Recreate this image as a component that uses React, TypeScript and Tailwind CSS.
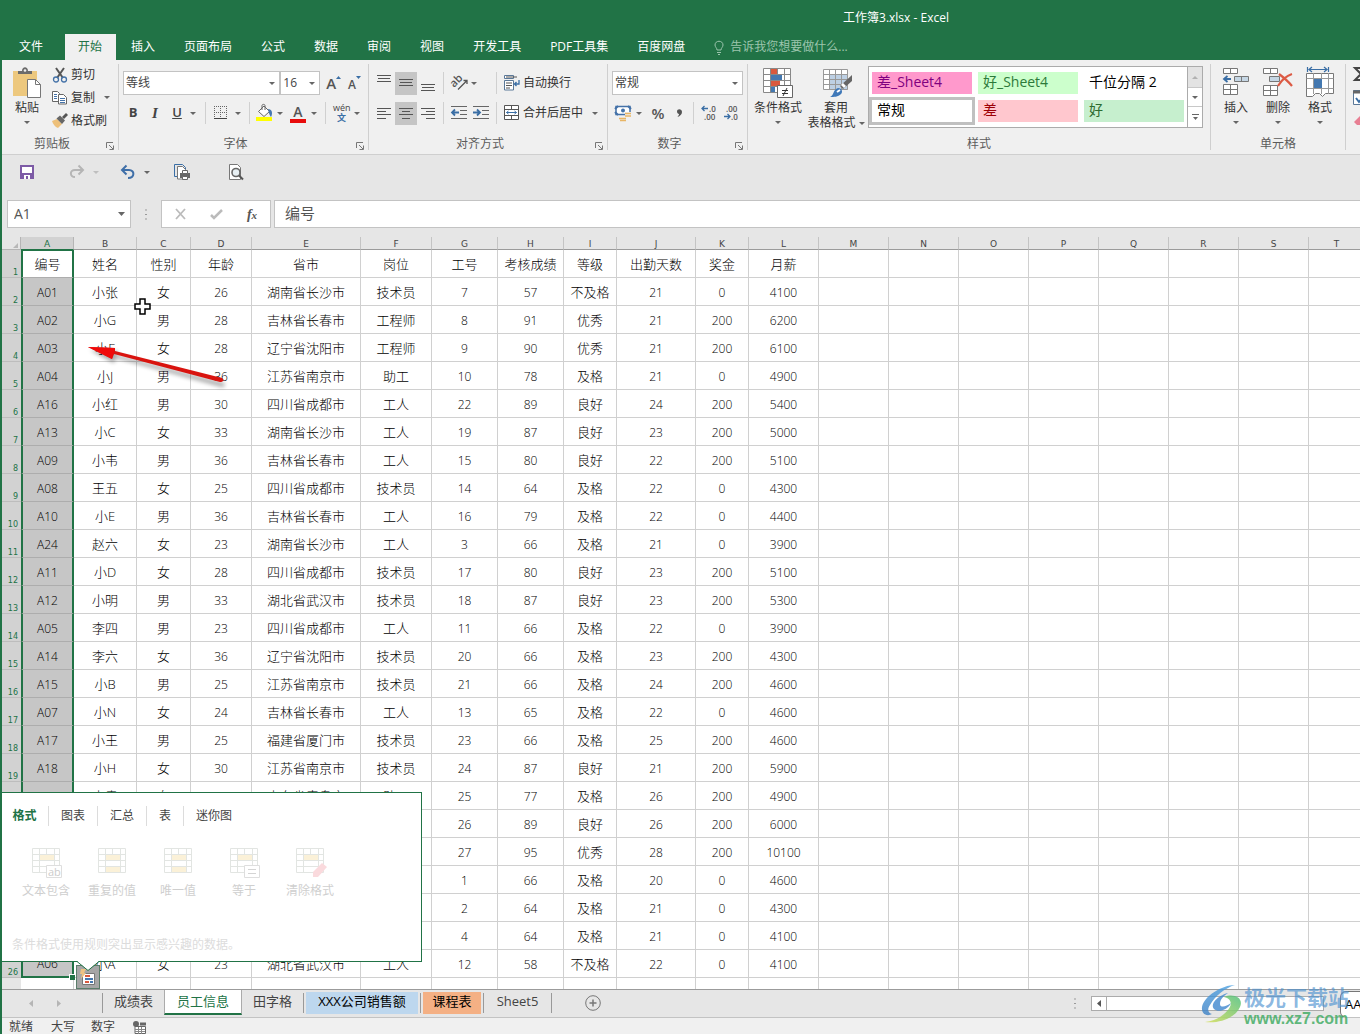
import React from "react";

const UI_FONT = "font-['Open_Sans','Noto_Sans_CJK_SC',sans-serif]";

const RIBBON_TABS = [
  "插入",
  "页面布局",
  "公式",
  "数据",
  "审阅",
  "视图",
  "开发工具",
  "PDF工具集",
  "百度网盘"
];

const COLUMNS: [string, number][] = [
  ["A", 53],
  ["B", 63],
  ["C", 54],
  ["D", 61],
  ["E", 109],
  ["F", 71],
  ["G", 66],
  ["H", 66],
  ["I", 53],
  ["J", 79],
  ["K", 53],
  ["L", 70],
  ["M", 70],
  ["N", 70],
  ["O", 70],
  ["P", 70],
  ["Q", 70],
  ["R", 70],
  ["S", 70],
  ["T", 56]
];

const ROWS: string[][] = [
  "编号,姓名,性别,年龄,省市,岗位,工号,考核成绩,等级,出勤天数,奖金,月薪",
  "A01,小张,女,26,湖南省长沙市,技术员,7,57,不及格,21,0,4100",
  "A02,小G,男,28,吉林省长春市,工程师,8,91,优秀,21,200,6200",
  "A03,小F,女,28,辽宁省沈阳市,工程师,9,90,优秀,21,200,6100",
  "A04,小J,男,36,江苏省南京市,助工,10,78,及格,21,0,4900",
  "A16,小红,男,30,四川省成都市,工人,22,89,良好,24,200,5400",
  "A13,小C,女,33,湖南省长沙市,工人,19,87,良好,23,200,5000",
  "A09,小韦,男,36,吉林省长春市,工人,15,80,良好,22,200,5100",
  "A08,王五,女,25,四川省成都市,技术员,14,64,及格,22,0,4300",
  "A10,小E,男,36,吉林省长春市,工人,16,79,及格,22,0,4400",
  "A24,赵六,女,23,湖南省长沙市,工人,3,66,及格,21,0,3900",
  "A11,小D,女,28,四川省成都市,技术员,17,80,良好,23,200,5100",
  "A12,小明,男,33,湖北省武汉市,技术员,18,87,良好,23,200,5300",
  "A05,李四,男,23,四川省成都市,工人,11,66,及格,22,0,3900",
  "A14,李六,女,36,辽宁省沈阳市,技术员,20,66,及格,23,200,4300",
  "A15,小B,男,25,江苏省南京市,技术员,21,66,及格,24,200,4600",
  "A07,小N,女,24,吉林省长春市,工人,13,65,及格,22,0,4600",
  "A17,小王,男,25,福建省厦门市,技术员,23,66,及格,25,200,4600",
  "A18,小H,女,30,江苏省南京市,技术员,24,87,良好,21,200,5900",
  "A19,小袁,女,34,山东省青岛市,助工,25,77,及格,26,200,4900",
  ",,,,,,26,89,良好,26,200,6000",
  ",,,,,,27,95,优秀,28,200,10100",
  ",,,,,,1,66,及格,20,0,4600",
  ",,,,,,2,64,及格,21,0,4300",
  ",,,,,,4,64,及格,21,0,4100",
  "A06,小A,女,23,湖北省武汉市,工人,12,58,不及格,22,0,4100",
  ""
].map(line => line.split(","));

const LAST_SELECTED = 25;

type IconProps = {
  w: number;
  h: number;
  className?: string;
  children: React.ReactNode;
};

const Icon = ({ w, h, className = "", children }: IconProps) => (
  <svg
    width={w}
    height={h}
    viewBox={`0 0 ${w} ${h}`}
    fill="none"
    className={`shrink-0 overflow-visible ${className}`}
    aria-hidden="true"
  >
    {children}
  </svg>
);

const Caret = ({ className = "" }: { className?: string }) => (
  <Icon w={6} h={3} className={className}>
    <path d="M0 0h6L3 3z" fill="#666" />
  </Icon>
);

const Divider = () => <div className="h-[22px] w-px shrink-0 bg-[#d0d0d0]" />;

type GroupProps = {
  title: string;
  className: string;
  launcher?: boolean;
  children: React.ReactNode;
};

const Group = ({ title, className, launcher = true, children }: GroupProps) => (
  <section
    className={`my-1 flex h-[86px] shrink-0 flex-col border-r border-[#cfcfcf] ${className}`}
  >
    <div className="h-[70px]">{children}</div>
    <div className="relative flex h-4 items-center justify-center pt-[3px] text-[#5c5c5c]">
      <span className={launcher ? "pr-4" : ""}>{title}</span>
      {launcher && (
        <button className="absolute right-1 bottom-0" aria-label={`${title}设置`}>
          <Icon w={8} h={8}>
            <path d="M.5 6V.5H7M3 3l4 4M7.500 3.500V7.500H3.500" stroke="#777" />
          </Icon>
        </button>
      )}
    </div>
  </section>
);

type LinesProps = { rows: [number, number][]; y: number };

const Lines = ({ rows, y }: LinesProps) => (
  <Icon w={14} h={17}>
    {rows.map(([x, width], i) => (
      <rect
        key={i}
        x={x}
        y={y + Math.floor(i * 3.4)}
        width={width}
        height="1"
        fill="#555"
      />
    ))}
  </Icon>
);

const AlignButton = ({
  label,
  active = false,
  rows,
  y
}: LinesProps & { label: string; active?: boolean }) => (
  <button
    aria-label={label}
    aria-pressed={active}
    className={`flex h-[23px] w-[22px] items-center justify-center ${
      active ? "bg-[#c5c5c5]" : ""
    }`}
  >
    <Lines rows={rows} y={y} />
  </button>
);

type ComboProps = { label: string; value: string; className: string };

const Combo = ({ label, value, className }: ComboProps) => (
  <div className={`relative flex h-6 items-center ${className}`}>
    <select
      aria-label={label}
      defaultValue={value}
      className="h-full w-full appearance-none border border-[#c3c3c3] bg-white pl-[2px] text-[#444] outline-none"
    >
      <option>{value}</option>
    </select>
    <Caret className="pointer-events-none absolute right-[5px]" />
  </div>
);

type BigButtonProps = {
  label: string;
  className: string;
  icon: React.ReactNode;
};

const BigButton = ({ label, className, icon }: BigButtonProps) => (
  <button className={`flex shrink-0 flex-col items-center ${className}`}>
    <span className="flex h-[35px] items-start pt-1">{icon}</span>
    <span className="h-[18px] leading-[18px]">{label}</span>
    <Caret className="mt-1" />
  </button>
);

/* ---------- ribbon icons ---------- */

const PasteIcon = () => (
  <Icon w={28} h={30}>
    <path d="M0 3h24v25H0z" fill="#edc87e" />
    <path d="M5 6V3h4c0-5 6-5 6 0h4v3z" fill="#6b6b6b" />
    <circle cx="12" cy="2.500" r="1.300" fill="#f0f0f0" />
    <path d="M14.500 11.500h8l5 5v13h-13z" fill="#fff" stroke="#777" />
    <path d="M22.500 11.500v5h5" stroke="#777" />
  </Icon>
);

const CutIcon = () => (
  <Icon w={16} h={16}>
    <path d="M4 1l7 10M12 1L5 11" stroke="#555" strokeWidth="2" />
    <circle cx="4" cy="12.500" r="2.500" stroke="#4472a8" strokeWidth="1.300" />
    <circle cx="12" cy="12.500" r="2.500" stroke="#4472a8" strokeWidth="1.300" />
  </Icon>
);

const CopyIcon = () => (
  <Icon w={16} h={16}>
    <path d="M.5 1.500h5l2 2v8h-7z" fill="#fff" stroke="#666" />
    <path d="M2 4.500h3M2 6.500h3M2 8.500h3" stroke="#4472a8" />
    <path d="M6.500 4.500h5l3 3v6.500h-8z" fill="#fff" stroke="#666" />
    <path d="M8 8.500h5M8 10.500h5M8 12.500h5" stroke="#4472a8" />
  </Icon>
);

const PainterIcon = () => (
  <Icon w={16} h={16}>
    <path d="M0 8l5-2 5 5-4 4c-3-1-5-4-6-7z" fill="#edc07a" />
    <path d="M4.500 5.500L8 2.500l5 5-3 3.500z" fill="#666" />
    <path d="M10 4l4-4 2 2-4 4z" fill="#555" />
  </Icon>
);

const BordersIcon = () => (
  <Icon w={14} h={14}>
    <path
      d="M.5 0v12M6.500 0v12M12.500 0v12M0 .5h13M0 6.500h13"
      stroke="#666"
      strokeDasharray="1 1"
    />
    <path d="M0 12.500h13" stroke="#444" />
  </Icon>
);

const FillIcon = () => (
  <Icon w={17} h={18}>
    <path d="M2.500 7.500L8 2l5.500 5.500-5.500 5z" fill="#fff" stroke="#666" />
    <path d="M6 6V1.500c0-1.500 3-1.500 3 0V6" stroke="#666" />
    <path d="M12 5c4 0 5 4 3 8-1-1-2-3-3-8z" fill="#4678b0" />
    <path d="M0 13h16v4H0z" fill="#ff0" />
  </Icon>
);

const OrientationIcon = () => (
  <Icon w={18} h={18}>
    <text
      x="0"
      y="11"
      fontSize="11"
      fontWeight="600"
      fill="#555"
      transform="rotate(-45 5 9)"
    >
      ab
    </text>
    <path d="M7 15.500L16 6.500M12.500 6.500H16V10" stroke="#555" strokeWidth="1.300" />
  </Icon>
);

const IndentIcon = ({ right = false }: { right?: boolean }) => (
  <Icon w={16} h={14}>
    <path d="M0 .5h16M9 4.500h7M9 8.500h7M0 12.500h16" stroke="#666" />
    <path
      d={right ? "M0 6.500h7M4 3.500l3 3-3 3" : "M1 6.500h7M4 3.500l-3 3 3 3"}
      stroke="#3a6ea5"
      strokeWidth="1.800"
    />
  </Icon>
);

const WrapIcon = () => (
  <Icon w={16} h={16}>
    <path d="M.5.5h9v3h-9zM.5 5.500h9v9.500h-9z" fill="#fff" stroke="#5a7898" />
    <path d="M2 2h11M2 8h6M2 10.500h6M2 13h4" stroke="#555" />
    <path d="M15 5v4h-4M12.500 7l-2 2 2 2" stroke="#3a6ea5" strokeWidth="1.300" />
  </Icon>
);

const MergeIcon = () => (
  <Icon w={16} h={16}>
    <path d="M.5.5h14v14H.5z" fill="#fff" stroke="#555" />
    <path d="M.5 4.500h14M.5 10.500h14M7.500 0v4M7.500 11v4" stroke="#555" />
    <path d="M2.500 7.500h10M4.500 6l-2 1.500 2 1.500M10.500 6l2 1.500-2 1.500" stroke="#3a6ea5" />
  </Icon>
);

const MoneyIcon = () => (
  <Icon w={17} h={17}>
    <path d="M1 1.500h14v8H1z" fill="#fff" stroke="#4472a8" strokeWidth="1.500" />
    <path d="M0 4l3-3M13 1l3 3M0 7l3 3" stroke="#4472a8" strokeWidth="2" />
    <circle cx="8" cy="5.500" r="2" fill="#4472a8" />
    <path d="M10 7h6v5h-6z" fill="#f0f0f0" />
    <path d="M10 8.500h6M10 11h6M4 13.500h7M5 15.500h6" stroke="#e8b565" strokeWidth="1.500" />
  </Icon>
);

const DecimalIcon = ({ increase = false }: { increase?: boolean }) => (
  <Icon w={15} h={16}>
    <text x={increase ? 7 : 2} y="7" fontSize="8" fontWeight="600" fill="#555">
      {increase ? ".0" : ".00"}
    </text>
    <text x={increase ? 2 : 7} y="15" fontSize="8" fontWeight="600" fill="#555">
      {increase ? ".00" : ".0"}
    </text>
    <path
      d={
        increase
          ? "M0 3.500h6M2.500 1L0 3.500 2.500 6"
          : "M0 11.500h6M3.500 9L6 11.500 3.500 14"
      }
      stroke="#3a6ea5"
      strokeWidth="1.300"
    />
  </Icon>
);

const ConditionalIcon = () => (
  <Icon w={30} h={31}>
    <path d="M.5.5h27v24H.5z" fill="#fff" />
    <path d="M8 1h6v5H8zM8 13h9v5H8z" fill="#d9593d" />
    <path d="M8 7h11v5H8zM8 19h4v5H8z" fill="#4478b0" />
    <path
      d="M.5.5h27v24H.5zM.5 6.500h27M.5 12.500h27M.5 18.500h27M7.500 0v24M14.500 0v6M21.500 0v18"
      stroke="#888"
    />
    <path d="M14.500 17.500h15v12h-15z" fill="#fff" stroke="#666" />
    <path d="M19 22.500h6M19 25.500h6M24 20l-4 8" stroke="#333" />
  </Icon>
);

const TableFormatIcon = () => (
  <Icon w={30} h={30}>
    <path d="M.5 1.500h24v20H.5z" fill="#fff" />
    <path d="M7 7h18v15H7z" fill="#bdd0e4" />
    <path
      d="M.5 1.500h24v20H.5zM.5 6.500h24M.5 11.500h24M.5 16.500h24M6.500 1v21M12.500 1v21M18.500 1v21"
      stroke="#999"
    />
    <path d="M29 7v6l-9 8-3-3z" fill="#666" />
    <path d="M20 15l3 3-2 2-3-3z" fill="#fff" />
    <path d="M7 29c4-1 3-8 8-9 4 0 5 4 3 6-3 3-7 3-11 3z" fill="#3f78b8" />
    <path d="M14 24l3-2" stroke="#fff" strokeWidth="2" />
  </Icon>
);

const InsertIcon = () => (
  <Icon w={27} h={29}>
    <path
      d="M.5.5h14v5H.5zM7.500 0v6M.5 16.500h14v10H.5zM7.500 16v11M0 21.500h15"
      fill="#fff"
      stroke="#777"
    />
    <path d="M11.500 8.500h14v5h-14zM18.500 8v6" fill="#c5d6e4" stroke="#777" />
    <path d="M1 11h7M4.500 8L1 11l3.500 3" stroke="#3a6ea5" strokeWidth="1.800" />
  </Icon>
);

const DeleteIcon = () => (
  <Icon w={31} h={29}>
    <path
      d="M.5.5h14v5H.5zM7.500 0v6M.5 17.500h14v10H.5zM7.500 17v11M0 22.500h15"
      fill="#fff"
      stroke="#777"
    />
    <path d="M6.500 8.500h10v5h-10z" fill="#c5d6e4" stroke="#777" />
    <path d="M16 6c4 3 9 7 13 12M29 6c-6 2-11 7-14 12" stroke="#dc5a44" strokeWidth="2.200" />
  </Icon>
);

const FormatIcon = () => (
  <Icon w={29} h={32}>
    <path
      d="M1.500-1v5M22.500-1v5M3 1.500h18M6-1L3 1.500 6 4M18-1l3 2.500L18 4"
      stroke="#3a6ea5"
      strokeWidth="1.200"
    />
    <path d="M.5 5.500h27v20h-8l-3 3-3-3h-4l-3 3h-6z" fill="#fff" stroke="#777" />
    <path d="M.5 10.500h27M.5 20.500h27M7.500 5v21M15.500 5v21M22.500 5v21" stroke="#999" />
    <path d="M8 11h8v9H8z" fill="#4478b0" />
  </Icon>
);

/* ---------- header and ribbon ---------- */

const TitleBar = () => (
  <header className="bg-[#217346] text-white">
    <div className="flex h-[34px] items-center justify-center pt-px pl-[430px]">
      工作簿3.xlsx - Excel
    </div>
    <nav className="flex h-[26px] items-stretch gap-px">
      <button className="pr-[21px] pl-[17px]">文件</button>
      <button className="bg-[#f0f0f0] pr-[14px] pl-[13px] text-[#217346]">开始</button>
      {RIBBON_TABS.map(tab => (
        <button key={tab} className="px-[14px]">
          {tab}
        </button>
      ))}
      <button className="ml-[14px] flex items-center gap-[6px] text-[#9cc5ad]">
        <Icon w={10} h={15}>
          <path
            d="M3 10c0-2-2-3-2-5 0-5 8-5 8 0 0 2-2 3-2 5zM3 12.500h4M4 14.500h2"
            stroke="#9cc5ad"
          />
        </Icon>
        告诉我您想要做什么...
      </button>
    </nav>
  </header>
);

const ClipboardGroup = () => (
  <Group title="剪贴板" className="w-[117px]">
    <div className="flex">
      <BigButton label="粘贴" className="w-[50px]" icon={<PasteIcon />} />
      <div className="-mt-px flex flex-col">
        <button className="flex h-[23px] items-center gap-[3px]">
          <CutIcon /> 剪切
        </button>
        <button className="flex h-[23px] items-center gap-[3px]">
          <CopyIcon /> 复制 <Caret className="ml-[6px]" />
        </button>
        <button className="flex h-[23px] items-center gap-[3px]">
          <PainterIcon /> 格式刷
        </button>
      </div>
    </div>
  </Group>
);

const FontGroup = () => (
  <Group title="字体" className="w-[250px]">
    <div className="flex items-center pt-[7px] pl-1">
      <Combo label="字体" value="等线" className="w-[158px]" />
      <Combo label="字号" value="16" className="w-10" />
      <button className="ml-[6px] flex w-5 text-[15px] font-semibold text-[#555]">
        A
        <Icon w={5} h={3} className="mt-1">
          <path d="M0 3h5L2.500 0z" fill="#3a6ea5" />
        </Icon>
      </button>
      <button className="ml-[2px] flex w-5 pt-1 text-[12px] font-semibold text-[#555]">
        A
        <Icon w={5} h={3}>
          <path d="M0 0h5L2.500 3z" fill="#3a6ea5" />
        </Icon>
      </button>
    </div>
    <div className="mt-[6px] flex h-6 items-center">
      <button className="ml-[3px] w-[22px] text-[13px] font-bold text-[#444]">B</button>
      <button className="w-[22px] font-['Liberation_Serif',serif] text-[15px] font-bold text-[#444] italic">
        I
      </button>
      <button className="w-[22px] text-[13px] font-semibold text-[#444] underline">U</button>
      <Caret className="mr-[9px] ml-[2px]" />
      <Divider />
      <button className="flex w-[29px] justify-center" aria-label="边框">
        <BordersIcon />
      </button>
      <Caret className="mr-[8px]" />
      <Divider />
      <button className="ml-[6px] flex w-[21px]" aria-label="填充颜色">
        <FillIcon />
      </button>
      <Caret />
      <button className="ml-[7px] w-4 border-b-4 border-[#e80c0c] text-[14px] leading-[15px] font-semibold text-[#555]">
        A
      </button>
      <Caret className="mr-[8px] ml-[5px]" />
      <Divider />
      <button className="ml-[6px] flex w-5 flex-col items-center" aria-label="显示拼音字段">
        <Icon w={18} h={18}>
          <text x="0" y="7" fontSize="9" fill="#444">
            wén
          </text>
          <text x="4" y="17" fontSize="9" fontWeight="700" fill="#3a6ea5">
            文
          </text>
        </Icon>
      </button>
      <Caret className="ml-[2px]" />
    </div>
  </Group>
);

const AlignGroup = () => (
  <Group title="对齐方式" className="w-[239px]">
    <div className="mt-[7px] flex h-6 items-center pl-1">
      <AlignButton label="顶端对齐" y={0} rows={[[0, 14], [1, 12], [0, 14]]} />
      <AlignButton label="垂直居中" active y={4} rows={[[0, 14], [1, 12], [0, 14]]} />
      <AlignButton label="底端对齐" y={9} rows={[[0, 14], [1, 12], [0, 14]]} />
      <div className="w-1" />
      <Divider />
      <button className="flex w-[52px] items-center pl-[7px]" aria-label="方向">
        <OrientationIcon />
        <Caret className="ml-[2px]" />
      </button>
      <Divider />
      <button className="flex items-center gap-[3px] pl-[7px]">
        <WrapIcon /> 自动换行
      </button>
    </div>
    <div className="mt-[6px] flex h-6 items-center pl-1">
      <AlignButton label="左对齐" y={3} rows={[[0, 14], [0, 9], [0, 14], [0, 9]]} />
      <AlignButton label="居中" active y={3} rows={[[0, 14], [3, 8], [0, 14], [3, 8]]} />
      <AlignButton label="右对齐" y={3} rows={[[0, 14], [5, 9], [0, 14], [5, 9]]} />
      <div className="w-1" />
      <Divider />
      <div className="flex w-[52px] gap-[6px] pl-[7px]">
        <button aria-label="减少缩进量">
          <IndentIcon />
        </button>
        <button aria-label="增加缩进量">
          <IndentIcon right />
        </button>
      </div>
      <Divider />
      <button className="flex items-center gap-[3px] pl-[7px]">
        <MergeIcon /> 合并后居中 <Caret className="ml-[6px]" />
      </button>
    </div>
  </Group>
);

const NumberGroup = () => (
  <Group title="数字" className="w-[140px]">
    <div className="pt-[7px] pl-1">
      <Combo label="数字格式" value="常规" className="w-[131px]" />
    </div>
    <div className="mt-[6px] flex h-6 items-center pl-[7px]">
      <button aria-label="会计数字格式">
        <MoneyIcon />
      </button>
      <Caret className="ml-[4px]" />
      <button className="ml-1 w-6 text-[15px] leading-5 font-semibold text-[#555]">%</button>
      <button className="flex w-[18px] justify-center" aria-label="千位分隔样式">
        <Icon w={6} h={8}>
          <path
            d="M1 2.500c0-3 5-3 5 .5 0 2.500-2 4-4.500 5 1-1.500 1.500-2 1.500-3C2 5 1 4 1 2.500z"
            fill="#555"
          />
        </Icon>
      </button>
      <div className="w-[5px]" />
      <Divider />
      <button className="ml-[8px] w-[22px]" aria-label="增加小数位数">
        <DecimalIcon increase />
      </button>
      <button aria-label="减少小数位数">
        <DecimalIcon />
      </button>
    </div>
  </Group>
);

const GALLERY: [string, string][] = [
  ["差_Sheet4", "bg-[#ff99cc] text-[#800080]"],
  ["好_Sheet4", "bg-[#ccffcc] text-[#2c7a3a]"],
  ["千位分隔 2", "bg-white text-black"],
  ["常规", "bg-white text-black outline-3 outline-[#c0c0c0]"],
  ["差", "bg-[#ffc7ce] text-[#9c0006]"],
  ["好", "bg-[#c6efce] text-[#2c6b2f]"]
];

const StylesGroup = () => (
  <Group title="样式" className="w-[463px]" launcher={false}>
    <div className="flex">
      <BigButton label="条件格式" className="w-[60px]" icon={<ConditionalIcon />} />
      <button className="flex w-[60px] flex-col items-center pr-1">
        <span className="flex h-[35px] items-start pt-1 pl-1">
          <TableFormatIcon />
        </span>
        <span className="h-4 leading-[18px]">套用</span>
        <span className="flex h-4 items-center gap-[3px] leading-4 whitespace-nowrap">
          表格格式 <Caret />
        </span>
      </button>
      <div className="mt-[2px] flex h-[62px] w-[335px] border border-[#ababab] bg-white">
        <div className="grid flex-1 grid-cols-3 gap-[6px] px-[3px] py-[5px] text-[14px]">
          {GALLERY.map(([name, style]) => (
            <button
              key={name}
              className={`h-[22px] pb-[2px] pl-[5px] text-left leading-5 ${style}`}
            >
              {name}
            </button>
          ))}
        </div>
        <div className="flex w-[15px] flex-col border-l border-[#ababab]">
          <button
            className="flex h-5 items-center justify-center bg-[#e3e3e3]"
            aria-label="上一行"
          >
            <Caret className="rotate-180 opacity-40" />
          </button>
          <button
            className="flex h-5 items-center justify-center border-y border-[#c8c8c8]"
            aria-label="下一行"
          >
            <Caret />
          </button>
          <button className="flex h-5 items-center justify-center" aria-label="其他">
            <Icon w={7} h={6}>
              <path d="M0 .5h7" stroke="#666" />
              <path d="M1 3h5L3.500 6z" fill="#666" />
            </Icon>
          </button>
        </div>
      </div>
    </div>
  </Group>
);

const CellsGroup = () => (
  <Group title="单元格" className="w-[135px]" launcher={false}>
    <div className="flex pl-1">
      <BigButton label="插入" className="w-[42px]" icon={<InsertIcon />} />
      <BigButton label="删除" className="w-[42px]" icon={<DeleteIcon />} />
      <BigButton label="格式" className="w-[42px]" icon={<FormatIcon />} />
    </div>
  </Group>
);

const EditGroup = () => (
  <div className="flex shrink-0 flex-col gap-[9px] pt-[7px] pl-[7px]">
    <Icon w={14} h={14}>
      <path d="M12 3V1H2l6 6-6 6h10v-2" stroke="#444" strokeWidth="2" />
    </Icon>
    <Icon w={16} h={15}>
      <path d="M.5.5h15v14H.5z" fill="#fff" stroke="#5a7898" />
      <path d="M0 2h16" stroke="#666" strokeWidth="3" />
      <path d="M3 8l3 4 5-6" stroke="#3a6ea5" strokeWidth="2" />
    </Icon>
    <Icon w={16} h={12}>
      <path d="M1 8l7-7 5 5-5 5H4z" fill="#e87f93" />
    </Icon>
  </div>
);

const Ribbon = () => (
  <div className="flex h-[95px] overflow-hidden border-b border-[#cfcfcf] bg-[#f0f0f0] text-[#333]">
    <ClipboardGroup />
    <FontGroup />
    <AlignGroup />
    <NumberGroup />
    <StylesGroup />
    <CellsGroup />
    <EditGroup />
  </div>
);

const QuickAccess = () => (
  <div className="flex h-[45px] items-start pt-[9px] pl-[17px]">
    <button aria-label="保存">
      <Icon w={16} h={16}>
        <path d="M2 2h12v12H2z" fill="#fff" stroke="#7d5ba6" strokeWidth="2" />
        <path d="M3 9h10v4H3z" fill="#7d5ba6" />
        <path d="M5 11h6v4H5z" fill="#fff" />
        <path d="M7 12h2v3H7z" fill="#7d5ba6" />
      </Icon>
    </button>
    <button className="ml-[34px] flex items-center gap-[8px]" aria-label="恢复">
      <Icon w={16} h={16}>
        <path
          d="M14 6H6c-6 0-5 7 0 7M9.500 1.500L14 6l-4.500 4.500"
          stroke="#b5b5b5"
          strokeWidth="2"
        />
      </Icon>
      <Caret className="opacity-30" />
    </button>
    <button className="ml-[21px] flex items-center gap-[8px]" aria-label="撤消">
      <Icon w={16} h={16}>
        <path
          d="M2 6h7c6 0 6 8-1 8M6.500 1.500L2 6l4.500 4.500"
          stroke="#3f6fa8"
          strokeWidth="2"
        />
      </Icon>
      <Caret />
    </button>
    <button className="ml-[24px]" aria-label="快速打印">
      <Icon w={18} h={17}>
        <path d="M3 12.500H.5V.5h8l3 3V8" stroke="#3a6ea5" />
        <path d="M3.500 2.500h5l3 3V15h-8z" fill="#fff" stroke="#777" />
        <path d="M6 9h10v5H6z" fill="#666" />
        <path d="M8.500 6.500h5v3h-5zM8.500 12.500h5v3h-5z" fill="#fff" stroke="#666" />
      </Icon>
    </button>
    <button className="ml-[37px]" aria-label="打印预览">
      <Icon w={16} h={16}>
        <path d="M.5.5h8l3 3v12H.5z" fill="#fff" stroke="#777" />
        <circle cx="7" cy="8.500" r="4" fill="#e8f0f4" stroke="#666" strokeWidth="1.600" />
        <path d="M10 11.500l4 4" stroke="#555" strokeWidth="2" />
      </Icon>
    </button>
  </div>
);

const FormulaBar = () => (
  <div className="flex h-7 text-[14px] text-[#555]">
    <label className="relative ml-[5px] flex w-[124px] items-center">
      <input
        aria-label="名称框"
        defaultValue="A1"
        className="h-full w-full border border-[#c3c3c3] bg-white pb-px pl-[6px] outline-none"
      />
      <Icon w={7} h={4} className="absolute right-[6px]">
        <path d="M0 0h7L3.500 4z" fill="#666" />
      </Icon>
    </label>
    <div className="flex w-[30px] items-center justify-center">
      <Icon w={2} h={11}>
        <path d="M0 1h2M0 5.500h2M0 10h2" stroke="#999" />
      </Icon>
    </div>
    <div className="flex w-[110px] items-center border border-[#c3c3c3] bg-white">
      <button className="flex w-9 justify-center" aria-label="取消">
        <Icon w={11} h={10}>
          <path d="M1 0l9 10M10 0L1 10" stroke="#bbb" strokeWidth="1.800" />
        </Icon>
      </button>
      <button className="flex w-9 justify-center" aria-label="输入">
        <Icon w={13} h={11}>
          <path d="M1 6l3 3 8-8" stroke="#bbb" strokeWidth="2.500" />
        </Icon>
      </button>
      <button className="w-9 font-['Liberation_Serif',serif] font-bold italic">
        f<span className="text-[11px]">x</span>
      </button>
    </div>
    <input
      aria-label="编辑栏"
      defaultValue="编号"
      className="ml-[3px] min-w-0 flex-1 border border-r-0 border-[#c3c3c3] bg-white pb-[2px] pl-[10px] text-[15px] outline-none"
    />
  </div>
);

/* ---------- sheet ---------- */

const isCode = (value = "") => /^A?\d+$/.test(value);

const Sheet = () => (
  <div className="relative min-h-0 flex-1 overflow-hidden bg-white">
    <table className="w-[1363px] table-fixed border-separate border-spacing-0 text-center">
      <colgroup>
        <col className="w-[19px]" />
        {COLUMNS.map(([name, width]) => (
          <col key={name} style={{ width }} />
        ))}
      </colgroup>
      <thead className="text-[9px] leading-[10px] text-[#444]">
        <tr>
          <th className="h-[13px] border-r border-b border-[#b5b5b5] bg-[#e6e6e6] p-0">
            <Icon w={5} h={5} className="mt-1 ml-[11px]">
              <path d="M5 0v5H0z" fill="#b8b8b8" />
            </Icon>
          </th>
          {COLUMNS.map(([name], i) => (
            <th
              key={name}
              className={`h-[13px] border-r border-b p-0 pt-[2px] font-['DejaVu_Sans',sans-serif] font-normal ${
                i === 0
                  ? "border-r-[#b5b5b5] border-b-[#217346] bg-[#d2d2d2] text-[#217346]"
                  : "border-r-[#c4c4c4] border-b-[#9b9b9b] bg-[#e6e6e6]"
              }`}
            >
              {name}
            </th>
          ))}
        </tr>
      </thead>
      <tbody className="text-[13px] leading-5 font-light text-black">
        {ROWS.map((row, r) => (
          <tr key={r}>
            <th
              className={`h-7 border-b border-[#bdbdbd] p-0 pr-[3px] text-right align-bottom font-['DejaVu_Sans',sans-serif] text-[8px] leading-[9px] font-normal text-[#217346] ${
                r <= LAST_SELECTED ? "bg-[#d2d2d2]" : "bg-[#e6e6e6]"
              }`}
            >
              {r <= LAST_SELECTED && r + 1}
            </th>
            {COLUMNS.map(([name], c) => {
              const selected = c === 0 && r <= LAST_SELECTED;
              return (
                <td
                  key={name}
                  className={`h-7 p-0 whitespace-nowrap ${
                    isCode(row[c]) ? "pt-[2px] text-[12px]" : ""
                  } ${
                    selected
                      ? `border-x-2 border-x-[#217346] ${
                          r === LAST_SELECTED
                            ? "border-b-2 border-b-[#217346]"
                            : "border-b border-b-[#adadad]"
                        } ${
                          r === 0
                            ? "border-t border-t-[#217346] bg-white"
                            : "bg-[#c6c6c6]"
                        }`
                      : "border-r border-b border-[#d0d0d0]"
                  }`}
                >
                  {row[c]}
                </td>
              );
            })}
          </tr>
        ))}
      </tbody>
    </table>

    <svg
      className="pointer-events-none absolute top-[60px] left-[84px]"
      width="150"
      height="100"
      viewBox="0 0 150 100"
    >
      <path
        d="M54 2h5v5h5v5h-5v5h-5v-5h-5v-5h5z"
        fill="#fff"
        stroke="#000"
        strokeWidth="1.500"
      />
      <path
        d="M4 53l27 1v4l107 28c2 2 0 4-2 4L30 61l-2 5z"
        fill="#000"
        opacity="0.35"
        className="blur-[2px]"
      />
      <path d="M2 50l27 1v3l107 27c3 2 1 4-2 4L28 57l-2 5z" fill="#d9140f" />
      <path d="M2 50l27 1-3 11z" fill="#f00a0a" />
    </svg>
  </div>
);

/* ---------- quick analysis popup ---------- */

const POPUP_ITEMS = [
  {
    label: "文本包含",
    cells: "M8 7h14v5H8z",
    extra: (
      <>
        <path d="M14.500 17.500h15v12h-15z" fill="#fff" stroke="#dedede" />
        <text x="16" y="28" fontSize="11" fill="#ccc">
          ab
        </text>
      </>
    )
  },
  { label: "重复的值", cells: "M8 7h14v5H8zM8 19h14v5H8z", extra: null },
  { label: "唯一值", cells: "M8 7h14v5H8zM8 19h14v5H8z", extra: null },
  {
    label: "等于",
    cells: "M8 7h14v5H8z",
    extra: (
      <>
        <path d="M14.500 17.500h15v12h-15z" fill="#fff" stroke="#dedede" />
        <path d="M18 21.500h8M18 25.500h8" stroke="#d4d4d4" />
      </>
    )
  },
  {
    label: "清除格式",
    cells: "M8 7h14v5H8z",
    extra: <path d="M17 24l9-9 5 4-9 10h-5z" fill="#fadadd" />
  }
];

const QuickAnalysis = () => (
  <>
    <button
      aria-label="快速分析"
      className="absolute top-[965px] left-[76px] flex h-6 w-6 items-center justify-center border border-[#5a7d6a] bg-[#a6a6a6]"
    >
      <Icon w={16} h={16}>
        <path d="M2.500 4.500h12v11h-12z" fill="#fff" stroke="#777" />
        <path d="M5 7h5M5 13h4" stroke="#d9593d" strokeWidth="2" />
        <path d="M5 10h8M10 13h3" stroke="#4478b0" strokeWidth="2" />
        <path d="M1 0h5L4 4h2L1 10l1-5H0z" fill="#eec283" />
      </Icon>
    </button>
    <div className="absolute top-[974px] left-[69px] h-[6px] w-[6px] border-t border-l border-white bg-[#217346]" />
    <div className="absolute top-[792px] left-0 h-[170px] w-[422px] border border-[#217346] bg-white">
      <div className="mt-[13px] flex h-5 items-center text-[#444]">
        <button className="w-[47px] font-bold text-[#217346]">格式</button>
        {["图表", "汇总", "表", "迷你图"].map(tab => (
          <button key={tab} className="border-l border-[#dcdcdc] px-3 leading-5">
            {tab}
          </button>
        ))}
      </div>
      <div className="mt-[22px] flex pl-3">
        {POPUP_ITEMS.map(item => (
          <button
            key={item.label}
            className="flex w-[66px] flex-col items-center text-[#cfcfcf]"
          >
            <Icon w={30} h={31} className="ml-[2px]">
              <path d={item.cells} fill="#fbf1d8" />
              <path
                d="M.5.5h27v24H.5zM.5 6.500h27M.5 12.500h27M.5 18.500h27M7.500 0v24M14.500 0v6M22.500 0v24"
                stroke="#e2e5e2"
              />
              {item.extra}
            </Icon>
            <span className="mt-[3px] leading-[18px] whitespace-nowrap">{item.label}</span>
          </button>
        ))}
      </div>
      <p className="mt-9 pl-[11px] leading-[18px] text-[#dcdcdc]">
        条件格式使用规则突出显示感兴趣的数据。
      </p>
      <Icon w={22} h={11} className="absolute top-[168px] left-[76px]">
        <path d="M0 0l11 9.500L22 0z" fill="#fff" />
        <path d="M0 .5l11 9 11-9" stroke="#217346" />
      </Icon>
    </div>
  </>
);

/* ---------- bottom bars ---------- */

const SheetTabs = () => (
  <div className="flex h-7 items-start border-t border-[#9b9b9b] bg-[#e6e6e6] text-[13px] text-[#444]">
    <div className="flex h-[26px] w-[100px] items-center gap-6 pl-[27px]">
      <button aria-label="上一张">
        <Icon w={4} h={7}>
          <path d="M4 0v7L0 3.500z" fill="#b5b5b5" />
        </Icon>
      </button>
      <button aria-label="下一张">
        <Icon w={4} h={7}>
          <path d="M0 0v7l4-3.500z" fill="#b5b5b5" />
        </Icon>
      </button>
    </div>
    <button className="mt-[3px] h-[20px] border-l border-[#999] px-[11px] pb-1 leading-4">
      成绩表
    </button>
    <button className="h-[25px] w-[78px] border-x border-b-2 border-x-[#ababab] border-b-[#217346] bg-white pb-[2px] leading-5 text-[#217346]">
      员工信息
    </button>
    <button className="mt-[3px] h-[20px] w-[62px] border-r border-[#999] pb-1 leading-4">
      田字格
    </button>
    <button className="mt-[2px] ml-[2px] h-[22px] w-[112px] bg-[#bdd7ee] pb-1 leading-4 text-black">
      XXX公司销售额
    </button>
    <div className="mt-[3px] ml-[2px] h-[20px] w-px bg-[#999]" />
    <button className="mt-[2px] ml-[2px] h-[22px] w-[58px] bg-[#f4b084] pb-1 leading-4 text-black">
      课程表
    </button>
    <button className="mt-[3px] ml-[2px] h-[20px] w-[69px] border-x border-[#999] pb-1 leading-4">
      Sheet5
    </button>
    <button className="mt-[5px] ml-[33px]" aria-label="新工作表">
      <Icon w={16} h={16}>
        <circle cx="8" cy="8" r="7.300" stroke="#777" />
        <path d="M8 4.500v7M4.500 8h7" stroke="#777" strokeWidth="1.500" />
      </Icon>
    </button>
    <div className="ml-auto flex h-[26px] items-center">
      <Icon w={2} h={11} className="mr-[15px]">
        <path d="M0 1h2M0 5.500h2M0 10h2" stroke="#999" />
      </Icon>
      <div className="flex h-[15px] w-[233px] border border-[#ababab] bg-white">
        <button
          className="flex w-[15px] items-center justify-center border-r border-[#ababab]"
          aria-label="向左滚动"
        >
          <Icon w={4} h={7}>
            <path d="M4 0v7L0 3.500z" fill="#555" />
          </Icon>
        </button>
      </div>
    </div>
    <button className="mt-[1px] ml-4 h-[27px] w-5 overflow-hidden rounded-l-md border border-r-0 border-[#777] bg-white pl-1 text-left leading-[25px] text-black">
      AA
    </button>
  </div>
);

const StatusBar = () => (
  <footer className="flex h-[17px] items-center gap-[18px] border-t border-[#c3c3c3] bg-[#f0f0f0] pt-[2px] pl-[7px] text-[#444]">
    <span>就绪</span>
    <span>大写</span>
    <span className="-ml-[2px]">数字</span>
    <Icon w={13} h={13}>
      <path d="M2 5.500h10.500v7H2z" fill="#fff" stroke="#666" />
      <path d="M2 8.500h10M2 10.500h10M5.500 6v7M8.500 6v7" stroke="#888" />
      <path d="M7 1.500h6v3H7z" fill="#666" />
      <circle cx="3" cy="3" r="3" fill="#666" />
    </Icon>
  </footer>
);

const Watermark = () => (
  <div className="pointer-events-none absolute right-0 bottom-0 flex h-14 w-[160px] items-center">
    <Icon w={44} h={44} className="-mt-[5px]">
      <defs>
        <linearGradient id="swirl" x1="0" y1="0" x2="0" y2="1">
          <stop offset="0" stopColor="#4a9fe0" />
          <stop offset="1" stopColor="#3b7fc4" />
        </linearGradient>
        <linearGradient id="leaf" x1="1" y1="0" x2="0" y2="1">
          <stop offset="0" stopColor="#4fbf7d" />
          <stop offset="1" stopColor="#d6df5a" />
        </linearGradient>
      </defs>
      <path
        d="M35 3C22 3 4 14 2 25c-1 7 5 10 10 7-4-1-5-5-2-9C15 14 25 6 35 3z"
        fill="url(#swirl)"
        opacity="0.8"
      />
      <path
        d="M28 11c-11 3-18 11-14 16 4 4 14 1 17-6-5 4-11 5-11 1 0-4 3-8 8-11z"
        fill="#3f87ce"
        opacity="0.8"
      />
      <path
        d="M24 15c10-4 20 1 16 10-4 10-20 17-35 15 9-1 17-5 22-11 5-5 6-12-3-14z"
        fill="url(#leaf)"
        opacity="0.85"
      />
    </Icon>
    <div className="flex flex-col whitespace-nowrap">
      <span className="text-[21px] leading-[25px] font-bold text-[#4a90d0]/65">极光下载站</span>
      <span className="font-['Liberation_Sans',sans-serif] text-[16px] leading-[18px] font-bold text-[#45ad66]/85">
        www.xz7.com
      </span>
    </div>
  </div>
);

const App = () => (
  <div
    className={`relative flex h-screen w-full flex-col overflow-hidden border-l-2 border-[#217346] bg-[#e6e6e6] text-[12px] ${UI_FONT}`}
  >
    <TitleBar />
    <Ribbon />
    <QuickAccess />
    <FormulaBar />
    <div className="h-[9px] shrink-0" />
    <Sheet />
    <SheetTabs />
    <StatusBar />
    <div className="absolute top-0 -left-[2px]">
      <QuickAnalysis />
    </div>
    <Watermark />
  </div>
);

export default App;
